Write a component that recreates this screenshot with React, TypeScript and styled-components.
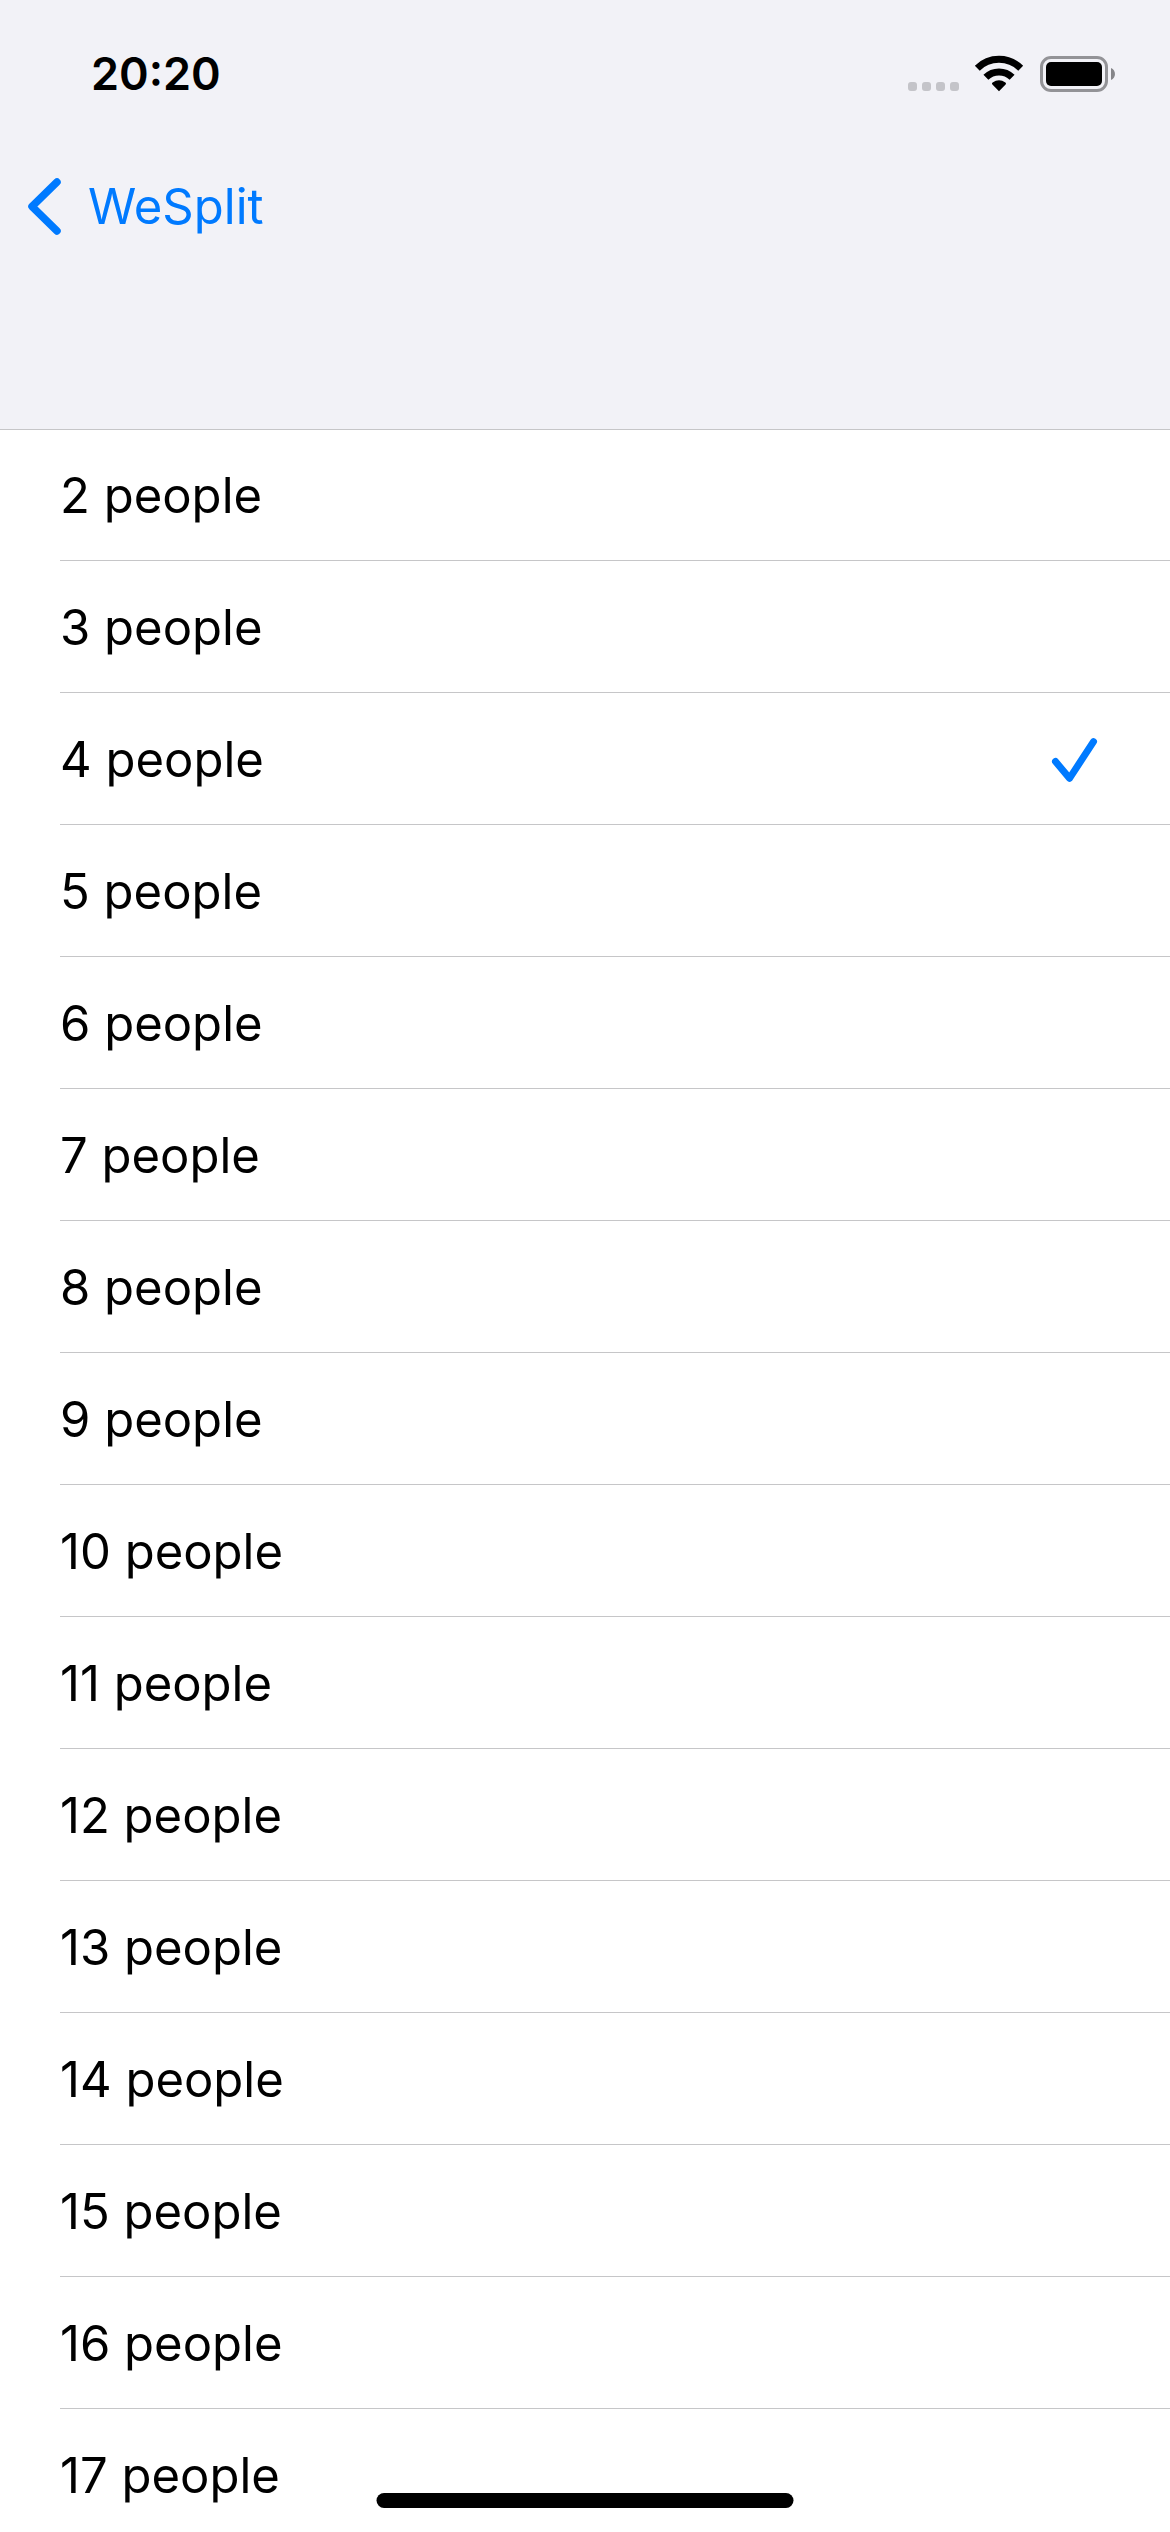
import React, { useState } from "react";
import styled, { createGlobalStyle } from "styled-components";

const BLUE = "#007aff";
const SEPARATOR = "#c6c6c8";

const GlobalStyle = createGlobalStyle`
  * { box-sizing: border-box; }
  body {
    margin: 0;
    background: #fff;
    color: #000;
    font-family: Inter, "Liberation Sans", sans-serif;
    font-size: 49px;
    line-height: 60px;
  }
`;

const Screen = styled.div`
  display: flex;
  flex-direction: column;
  height: 100vh;
`;

const Header = styled.header`
  flex: none;
  padding-bottom: 168px;
  background: #f2f2f7;
`;

const StatusBar = styled.div`
  display: flex;
  align-items: center;
  justify-content: space-between;
  height: 141px;
  padding: 7px 55px 0 91px;
`;

const Clock = styled.time`
  font-size: 45px;
  font-weight: 600;
`;

const StatusIcons = styled.div`
  display: flex;
  align-items: flex-end;
`;

const Signal = styled.div`
  display: flex;
  gap: 5px;
  margin: 0 16px 1px 0;
`;

const SignalDot = styled.span`
  width: 9px;
  height: 9px;
  border-radius: 3px;
  background: #c4c4c9;
`;

const Icon = styled.svg`
  display: block;
  flex: none;
  overflow: visible;
`;

const WifiIcon = styled(Icon)`
  margin-right: 17px;
`;

const NavBar = styled.nav`
  display: flex;
  align-items: center;
  height: 120px;
  padding: 12px 27px 0;
`;

const BackButton = styled.button`
  display: flex;
  align-items: center;
  gap: 27px;
  padding: 0;
  border: 0;
  background: none;
  color: ${BLUE};
  font: inherit;
  cursor: pointer;
`;

const List = styled.main`
  flex: 1;
  min-height: 0;
  overflow-y: auto;
  scrollbar-width: none;
  border-top: 1px solid ${SEPARATOR};
  padding-left: 60px;
`;

const Row = styled.label`
  display: flex;
  align-items: center;
  justify-content: space-between;
  height: 132px;
  padding: 2px 72px 0 0;
  border-bottom: 1px solid ${SEPARATOR};
  cursor: pointer;

  &:first-child { height: 131px; }
`;

const Radio = styled.input`
  appearance: none;
  width: 0;
  height: 0;
  margin: 0;
`;

const RowText = styled.span`
  flex: 1;
`;

const HomeIndicator = styled.div`
  position: fixed;
  bottom: 24px;
  left: 50%;
  width: 417px;
  height: 15px;
  border-radius: 8px;
  background: #000;
  transform: translateX(-50%);
`;

const counts = Array.from({ length: 16 }, (_, i) => i + 2);

export default function App() {
  const [selected, setSelected] = useState(4);

  return (
    <Screen>
      <GlobalStyle />
      <Header>
        <StatusBar>
          <Clock>20:20</Clock>
          <StatusIcons>
            <Signal>
              <SignalDot />
              <SignalDot />
              <SignalDot />
              <SignalDot />
            </Signal>
            <WifiIcon width="48" height="36" viewBox="0 1 48 36" aria-hidden="true">
              <g fill="none" stroke="#000" strokeWidth="7">
                <path d="M2.3 13.2A31 31 0 0 1 45.7 13.2" />
                <path d="M10.9 22.3A18.6 18.6 0 0 1 37.1 22.3" />
              </g>
              <path d="M24 36.2L17.4 29.4C16.8 28.8 16.9 28 17.6 27.5A11 11 0 0 1 30.4 27.5C31.1 28 31.2 28.8 30.6 29.4Z" />
            </WifiIcon>
            <Icon width="75" height="36" viewBox="0 0 75 36" aria-hidden="true">
              <rect x="1.5" y="1.5" width="65" height="33" rx="9.5" fill="none" stroke="#939397" strokeWidth="3" />
              <rect x="6" y="6" width="56" height="24" rx="5" />
              <path d="M71 12C76.3 14 76.3 22 71 24Z" fill="#858589" />
            </Icon>
          </StatusIcons>
        </StatusBar>
        <NavBar>
          <BackButton type="button">
            <Icon width="34" height="58" viewBox="0 0 34 58" aria-hidden="true">
              <path d="M30 4L5 28.5L30 53" fill="none" stroke={BLUE} strokeWidth="7.5" strokeLinecap="round" strokeLinejoin="round" />
            </Icon>
            WeSplit
          </BackButton>
        </NavBar>
      </Header>
      <List>
        {counts.map((n) => (
          <Row key={n}>
            <Radio type="radio" name="people" checked={n === selected} onChange={() => setSelected(n)} />
            <RowText>{n} people</RowText>
            {n === selected && (
              <Icon width="46" height="44" viewBox="0 0 46 44" aria-hidden="true">
                <path d="M3.5 23.5L17.5 40.3L41.5 3.7" fill="none" stroke={BLUE} strokeWidth="7" strokeLinecap="round" strokeLinejoin="round" />
              </Icon>
            )}
          </Row>
        ))}
      </List>
      <HomeIndicator />
    </Screen>
  );
}
